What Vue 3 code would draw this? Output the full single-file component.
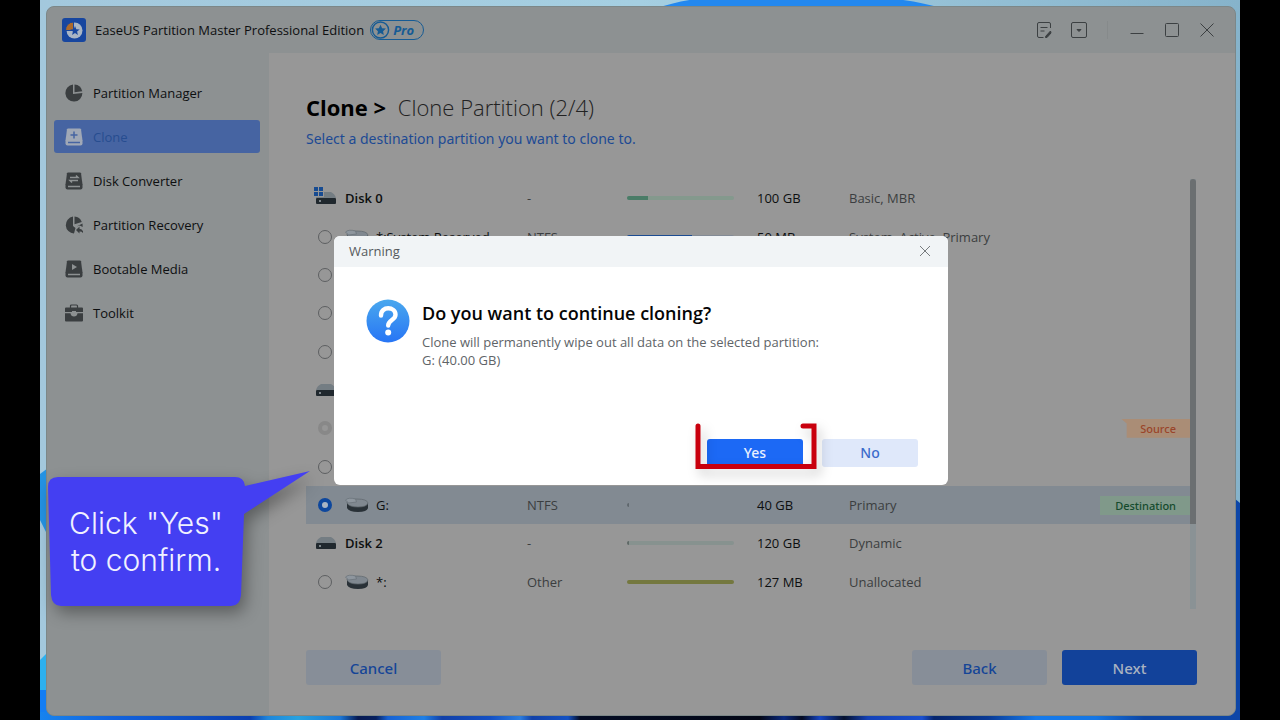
<script setup>
const nav = [
  { label: 'Partition Manager', icon: 'pie' },
  { label: 'Clone', icon: 'clone', active: true },
  { label: 'Disk Converter', icon: 'convert' },
  { label: 'Partition Recovery', icon: 'recover' },
  { label: 'Bootable Media', icon: 'media' },
  { label: 'Toolkit', icon: 'kit' },
]
const rows = [
  { disk: true, win: true, name: 'Disk 0', fs: '-', size: '100 GB', type: 'Basic, MBR', fill: 20, color: '#4a7c67', track: '#84998d' },
  { name: '*:System Reserved', fs: 'NTFS', size: '50 MB', type: 'System, Active, Primary', fill: 61, color: '#1c4c92', track: '#838b96' },
  {}, {}, {},
  { disk: true },
  { disabled: true, tag: 'Source' },
  {},
  { name: 'G:', fs: 'NTFS', size: '40 GB', type: 'Primary', fill: 2, color: '#5f676d', track: 'transparent', tag: 'Destination', selected: true },
  { disk: true, name: 'Disk 2', fs: '-', size: '120 GB', type: 'Dynamic', fill: 2, color: '#5f6866', track: '#87928f' },
  { name: '*:', fs: 'Other', size: '127 MB', type: 'Unallocated', fill: 100, color: '#74783f', track: '#74783f' },
]
</script>

<template>
  <div class="desktop">
    <svg class="wallpaper" viewBox="0 0 1200 720" preserveAspectRatio="none" aria-hidden="true">
      <defs>
        <linearGradient id="sky" x1="0" x2="1" y1="0" y2="0">
          <stop offset="0" stop-color="#a3c8dd" /><stop offset=".5" stop-color="#a5cfe2" /><stop offset="1" stop-color="#86b3cb" />
        </linearGradient>
        <linearGradient id="deep" x1="0" x2="1" y1="0" y2="0">
          <stop offset="0" stop-color="#1783ee" /><stop offset=".06" stop-color="#1263de" /><stop offset=".175" stop-color="#0b3fb0" />
          <stop offset=".19" stop-color="#1e86dc" /><stop offset=".215" stop-color="#27a2df" /><stop offset=".25" stop-color="#1c78d8" />
          <stop offset=".265" stop-color="#071a52" /><stop offset=".28" stop-color="#07205e" /><stop offset=".29" stop-color="#1762d4" />
          <stop offset=".32" stop-color="#1f80e6" /><stop offset=".335" stop-color="#1240a8" /><stop offset=".375" stop-color="#1450c4" />
          <stop offset=".4" stop-color="#2c7ee0" /><stop offset=".41" stop-color="#1241a8" /><stop offset=".44" stop-color="#1452c4" />
          <stop offset=".45" stop-color="#040c24" /><stop offset=".6" stop-color="#030716" />
          <stop offset=".62" stop-color="#0a2a80" /><stop offset=".635" stop-color="#030a20" /><stop offset=".65" stop-color="#1646c4" />
          <stop offset=".67" stop-color="#04102c" /><stop offset=".69" stop-color="#1442b8" /><stop offset=".735" stop-color="#1a50d0" />
          <stop offset=".745" stop-color="#06256d" /><stop offset=".79" stop-color="#0a3a94" /><stop offset=".83" stop-color="#157aec" />
          <stop offset=".88" stop-color="#1576e4" /><stop offset=".92" stop-color="#0d46a4" /><stop offset="1" stop-color="#0d46a8" />
        </linearGradient>
      </defs>
      <rect width="1200" height="720" fill="url(#sky)" />
      <path d="M618 8Q650-4 700-3H820Q870-2 900 8z" fill="#2388ef" />
      <path d="M0 474L8 468V536L0 520z" fill="#2493e4" />
      <path d="M0 660L8 652V720H0z" fill="#2cb0ef" />
      <rect x="0" y="690" width="8" height="30" fill="#137df3" />
      <path d="M1194 498L1200 503V720H1194z" fill="#0d46a8" />
      <rect y="712" width="1200" height="8" fill="url(#deep)" />
    </svg>

    <div class="window">
      <header class="titlebar">
        <svg class="logo" viewBox="0 0 24 24" aria-hidden="true">
          <rect width="24" height="24" rx="3" fill="#17469f" />
          <circle cx="12.5" cy="12.5" r="8" fill="#a9b5c4" />
          <path d="M11.500 12.500V4A8 8 0 0 0 3.500 12.500z" fill="#ac6a2c" stroke="#17469f" />
          <path d="M13 8l1.300 3.200 3.400.2-2.600 2.200.8 3.300-2.900-1.800-2.900 1.800.8-3.300-2.600-2.200 3.400-.2z" fill="#17469f" />
        </svg>
        <h1>EaseUS Partition Master Professional Edition</h1>
        <div class="pro">
          <svg viewBox="0 0 20 20" aria-hidden="true">
            <circle cx="10" cy="10" r="8.500" fill="none" stroke="#165b94" stroke-width="1.500" />
            <path d="M10 4.500l1.700 3.600 4 .4-3 2.700.8 4-3.500-2-3.500 2 .8-4-3-2.700 4-.4z" fill="#165b94" />
          </svg>
          <span>Pro</span>
        </div>
        <div class="controls">
          <button aria-label="Notes"><svg viewBox="0 0 16 16"><path d="M14.500 6V2Q14.500 .5 13 .5H3Q1.500 .5 1.500 2v12Q1.500 15.500 3 15.500H7.500M4.500 5.500h7M4.500 9h4" /><path d="M14.500 9L9.500 14.500V15.500H11L15 11z" class="solid" /></svg></button>
          <button aria-label="Menu"><svg viewBox="0 0 16 16"><rect x=".5" y=".5" width="15" height="15" rx="1.500" /><path d="M6 7.500h4L8 9.500z" class="solid" /></svg></button>
          <i class="sep"></i>
          <button aria-label="Minimize"><svg viewBox="0 0 16 16"><path d="M1.500 11.500h13" /></svg></button>
          <button aria-label="Maximize"><svg viewBox="0 0 16 16"><rect x="1.500" y="1.500" width="13" height="13" rx="1" /></svg></button>
          <button aria-label="Close"><svg viewBox="0 0 16 16"><path d="M1.500 1.500l13 13M14.500 1.500l-13 13" /></svg></button>
        </div>
      </header>

      <nav class="sidebar">
        <a v-for="n in nav" :key="n.label" href="#" :class="{ active: n.active }">
          <svg viewBox="0 0 18 18" aria-hidden="true">
            <g v-if="n.icon === 'pie'">
              <path d="M8 .6A8.500 8.500 0 1 0 17.400 9L8 10z" /><path d="M9.500 .5A8.500 8.500 0 0 1 17.300 7.300L9.500 8.200z" />
            </g>
            <g v-else-if="n.icon === 'recover'">
              <path d="M8 .6A8.500 8.500 0 0 0 9 17.500L10.500 12 8 10z" /><path d="M9.500 .5A8.500 8.500 0 0 1 16.800 6L9.500 8.200z" />
              <path d="M11 14l3.500-3.500v2.200q3.500 0 4 5-1.500-2.300-4-2.100v2z" />
              <path d="M11.500 10.500l6-3 .2 3.500-3-1.500z" />
            </g>
            <g v-else-if="n.icon === 'kit'">
              <path d="M5.500 4V2Q5.500 1 6.500 1h5Q12.500 1 12.500 2v2" fill="none" stroke="currentColor" stroke-width="1.200" />
              <path d="M1 3.500h16q1 0 1 1V8H0V4.500q0-1 1-1zM0 9.200H5.500q.5 3.300 3.500 3.300t3.500-3.300H18V16.500q0 1-1 1H1q-1 0-1-1z" /><path d="M7 7h4v3q-2 2-4 0z" class="hole" />
            </g>
            <g v-else>
              <path d="M3 .5h12q.8 0 1 .8L17.500 12.500H.5L2 1.300Q2.200.5 3 .5z" /><path d="M.5 12h17v3.500q0 2-2 2h-13q-2 0-2-2z" />
              <path d="M3 14.500h12" class="cut" />
              <path v-if="n.icon === 'clone'" d="M9 3.500v7M5.500 7h7" class="cut" />
              <path v-if="n.icon === 'convert'" d="M5 5.500h8L11 3.500M13 8.500H5l2 2" class="cut" />
              <path v-if="n.icon === 'media'" d="M7 4l5 3-5 3z" class="hole" />
            </g>
          </svg>
          <span>{{ n.label }}</span>
        </a>
      </nav>

      <main>
        <h2><b>Clone &gt;</b> Clone Partition (2/4)</h2>
        <p class="hint">Select a destination partition you want to clone to.</p>
        <div class="list">
          <table>
            <colgroup><col class="c-name" /><col class="c-fs" /><col class="c-use" /><col class="c-size" /><col /></colgroup>
            <tbody>
              <tr v-for="(r, i) in rows" :key="i" :class="{ selected: r.selected, disk: r.disk }">
                <td>
                  <label class="name">
                    <svg v-if="r.disk" class="drive" viewBox="0 0 22 20" aria-hidden="true">
                      <path d="M6 4h10q4 2 5 6H1Q2 6 6 4z" fill="#747d83" /><rect x="1" y="10" width="20" height="6" rx="1" fill="#20282e" />
                      <circle cx="5" cy="13" r="1" fill="#9da5aa" />
                      <g v-if="r.win"><path d="M-1-1h10v10H-1z" fill="#979797" /><path d="M-1-1h4v4h-4zM4-1h4v4H4zM-1 4h4v4h-4zM4 4h4v4H4z" fill="#174b91" /></g>
                    </svg>
                    <template v-else>
                      <input type="radio" name="dest" :checked="r.selected" :disabled="r.disabled" :aria-label="r.name || 'Partition'" />
                      <svg v-if="r.name" class="part" viewBox="0 0 24 16" aria-hidden="true">
                        <path d="M2 6v5q2 4 11 4t10-4V6z" fill="#293137" />
                        <path d="M2 5q2-3 10-3 10 0 11 4-1 4-10 4T2 6z" fill="#808890" stroke="#5f676d" stroke-width=".7" />
                        <path d="M.5 3q3-3 10-1l1 3-8 1z" fill="#8e969e" stroke="#697178" stroke-width=".7" />
                      </svg>
                    </template>
                    <span>{{ r.name }}</span>
                  </label>
                </td>
                <td class="soft">{{ r.fs }}</td>
                <td><div v-if="r.color" class="bar" :style="{ background: r.track }"><i :style="{ width: r.fill + '%', background: r.color }"></i></div></td>
                <td>{{ r.size }}</td>
                <td class="soft"><div class="last"><span>{{ r.type }}</span><span v-if="r.tag" class="tag" :class="r.tag.toLowerCase()">{{ r.tag }}</span></div></td>
              </tr>
            </tbody>
          </table>
          <div class="scroll"><i></i></div>
        </div>
        <footer>
          <button class="btn">Cancel</button>
          <button class="btn push">Back</button>
          <button class="btn primary">Next</button>
        </footer>
      </main>

      <div class="overlay">
        <section class="dialog" role="dialog" aria-labelledby="question">
          <header>
            <span>Warning</span>
            <button aria-label="Close dialog"><svg viewBox="0 0 12 12"><path d="M1 1l10 10M11 1L1 11" /></svg></button>
          </header>
          <div class="body">
            <svg class="ask" viewBox="0 0 44 44" aria-hidden="true">
              <defs><linearGradient id="ask" x1="0" y1="0" x2="0" y2="1"><stop offset="0" stop-color="#4aa8ee" /><stop offset="1" stop-color="#2775f5" /></linearGradient></defs>
              <circle cx="22" cy="22" r="21.500" fill="url(#ask)" />
              <path d="M15 16.500c0-10 14.500-9 14.500-.8 0 5.300-7.300 5.300-7.300 10.800" fill="none" stroke="#fff" stroke-width="4.400" stroke-linecap="round" />
              <circle cx="22.200" cy="33.500" r="3" fill="#fff" />
            </svg>
            <div>
              <h3 id="question">Do you want to continue cloning?</h3>
              <p>Clone will permanently wipe out all data on the selected partition:<br />G: (40.00 GB)</p>
            </div>
          </div>
          <div class="actions">
            <div class="yes-wrap">
              <button class="yes">Yes</button>
              <svg class="marker" viewBox="0 0 122 48" aria-hidden="true"><path d="M3 4V44.500H119V4H108" /></svg>
            </div>
            <button class="no">No</button>
          </div>
        </section>
      </div>
    </div>

    <div class="callout">
      <svg viewBox="0 0 264 136" aria-hidden="true"><path d="M10 6H187Q196 6 197 15L262 0 196 43 193 124Q192 135 183 135H13Q4 135 3 124L0 16Q0 6 10 6z" /></svg>
      <p>Click "Yes"<br />to confirm.</p>
    </div>
  </div>
</template>

<style>
html, body { background: #000; }
</style>

<style scoped>
* { box-sizing: border-box; }
button { font: inherit; border: 0; padding: 0; background: none; }
h1, h2, h3, p { margin: 0; }
.desktop { position: relative; display: flex; min-height: 100vh; margin: 0 40px; padding: 6px 4px 4px 6px; font: 13px/18px "Open Sans", "Noto Sans", sans-serif; color: #0d0f10; }
.wallpaper { position: absolute; inset: 0; width: 100%; height: 100%; }
.window { position: relative; flex: 1; display: grid; grid-template: 46px 1fr / 222px 1fr; background: #8d9192; border: 1px solid #7c8788; border-radius: 8px; overflow: hidden; }
.titlebar { grid-column: 1 / 3; display: flex; align-items: center; padding: 0 20px 0 15px; }
.logo { width: 24px; height: 24px; }
h1 { margin-left: 9px; font-size: 13px; font-weight: 500; white-space: nowrap; }
.pro { display: flex; align-items: center; height: 20px; width: 54px; margin-left: 6px; border: 1px solid #165b94; border-radius: 10px; color: #165b94; font-weight: 700; font-style: italic; }
.pro svg { width: 19px; height: 20px; margin-right: 3px; }
.controls { display: flex; align-items: center; margin-left: auto; }
.controls button { width: 16px; height: 16px; margin-left: 19px; }
.controls svg { display: block; width: 16px; height: 16px; fill: none; stroke: #3c4042; stroke-width: 1; }
.controls .solid { fill: #3c4042; }
.sep { width: 1px; height: 18px; margin: 0 2px 0 20px; background: #868a8b; }
.sidebar { display: flex; flex-direction: column; gap: 11px; padding: 23px 9px 0 7px; }
.sidebar a { display: flex; align-items: center; gap: 10px; height: 33px; padding-left: 11px; border-radius: 3px; color: #0d0f10; text-decoration: none; }
.sidebar svg { width: 18px; height: 18px; fill: currentColor; color: #3a3e40; --cut: #8d9192; }
.sidebar .active { background: #4664a2; color: #274d90; }
.sidebar .active svg { color: #a0a8b6; --cut: #4664a2; }
.cut { fill: none; stroke: var(--cut); stroke-width: 1.5; }
.hole { fill: var(--cut); }
main { display: flex; flex-direction: column; padding: 39px 38px 30px 37px; background: #979797; }
h2 { font-size: 22px; line-height: 30px; font-weight: 300; color: #222; }
h2 b { margin-right: 6px; font-weight: 700; color: #000; }
.hint { margin-top: 7px; font: 14px/20px "Noto Sans", sans-serif; color: #1d4a94; }
.list { display: flex; height: 430px; margin: 30px 1px 0 0; }
table { flex: 1; height: 422px; border-collapse: collapse; table-layout: fixed; }
td { height: 38px; padding: 0; white-space: nowrap; }
.c-name { width: 221px; } .c-fs { width: 100px; } .c-use { width: 130px; } .c-size { width: 92px; }
.selected { background: #828a92; }
.name { display: flex; align-items: center; padding-left: 12px; }
.disk .name { padding-left: 9px; font-weight: 600; }
.drive { width: 22px; height: 20px; margin-right: 8px; overflow: visible; }
.part { width: 24px; height: 16px; margin: 0 7px 0 13px; }
input { appearance: none; width: 14px; height: 14px; margin: 0; border: 1px solid #5d5f61; border-radius: 50%; }
input:checked { border: 4px solid #0d479d; background: #a7b4c4; }
input:disabled { border: 4px solid #888; background: #969696; }
.soft { color: #3b3e40; }
.bar { width: 107px; height: 4px; border-radius: 2px; overflow: hidden; }
.bar i { display: block; height: 4px; }
.last { display: flex; justify-content: space-between; align-items: center; }
.tag { margin-left: auto; padding: 0 14px 0 15px; font: 500 11px/19px "Noto Sans", sans-serif; }
.source { padding-left: 19px; color: #9a452a; background: #aa8d76; clip-path: polygon(0 0, 100% 0, 100% 100%, 8% 100%, 8% 25%); }
.destination { color: #154b2d; background: #80998a; }
.scroll { width: 6px; background: #8a9295; }
.scroll i { display: block; height: 345px; background: #6b6f71; border-radius: 3px 3px 0 0; }
footer { display: flex; gap: 15px; margin-top: auto; }
.btn { width: 135px; height: 35px; border-radius: 3px; background: #878e98; color: #154597; font: 500 15px/20px "Noto Sans", sans-serif; }
.push { margin-left: auto; }
.primary { background: #12429a; color: #a9b2c1; }
.overlay { position: absolute; inset: 0; display: flex; align-items: center; justify-content: center; padding-bottom: 2px; }
.dialog { width: 614px; background: #fff; border-radius: 6px; overflow: hidden; }
.dialog header { display: flex; align-items: center; justify-content: space-between; height: 31px; padding: 0 17px 0 15px; background: #f1f4f6; color: #55595c; }
.dialog header button { width: 12px; height: 12px; }
.dialog header svg { display: block; width: 12px; height: 12px; fill: none; stroke: #777b7e; }
.body { display: flex; gap: 12px; padding: 32px 32px 0; }
.ask { width: 44px; height: 44px; flex: none; }
h3 { font-size: 18px; line-height: 28px; font-weight: 600; color: #050505; }
.body p { margin-top: 6px; color: #606468; font-size: 13px; }
.actions { display: flex; justify-content: flex-end; gap: 19px; margin-top: 70px; padding: 0 30px 18px; }
.yes-wrap { position: relative; }
.actions button { display: block; width: 96px; height: 28px; border-radius: 3px; font: 500 14px/20px "Noto Sans", sans-serif; }
.actions .yes { background: #1c69f5; color: #e9f1ff; }
.actions .no { background: #dfe8fa; color: #3b6bcb; }
.marker { position: absolute; left: -12px; top: -17px; width: 122px; height: 48px; fill: none; stroke: #c9000e; stroke-width: 5; stroke-linecap: round; filter: drop-shadow(4px 6px 6px rgba(0, 0, 0, .2)); }
.callout { position: absolute; left: 8px; top: 471px; width: 264px; height: 136px; }
.callout svg { display: block; width: 264px; height: 136px; fill: #443ff2; filter: drop-shadow(4px 7px 8px rgba(0, 0, 0, .35)); }
.callout p { position: absolute; left: 0; top: 34px; width: 196px; text-align: center; color: #f0f1ff; font: 300 30px/37px Inter, "Open Sans", sans-serif; }
</style>
